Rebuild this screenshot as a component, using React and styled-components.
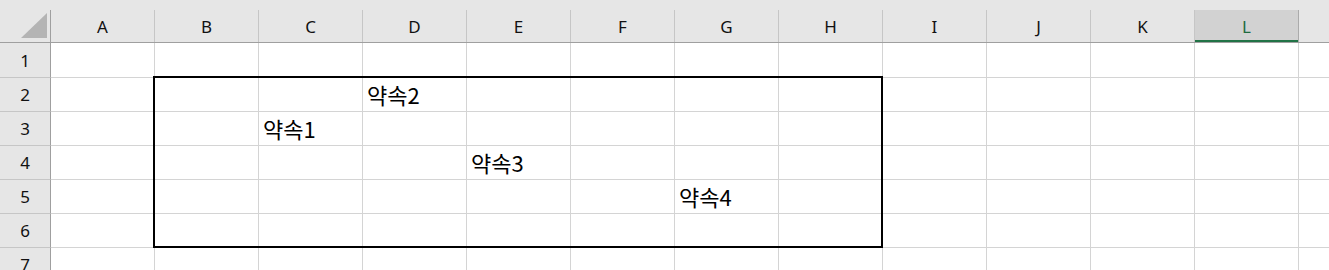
import styled, { createGlobalStyle } from "styled-components";

const GlobalStyle = createGlobalStyle`
    html, body {
        margin: 0;
        padding: 0;
        background: #FFFFFF;
    }
`;

const COLUMNS = ["A", "B", "C", "D", "E", "F", "G", "H", "I", "J", "K", "L", "M"];
const ROWS = [1, 2, 3, 4, 5, 6, 7];
const CELLS = {
    D2: "약속2",
    C3: "약속1",
    E4: "약속3",
    G5: "약속4",
};
const SELECTED_COLUMN = "L";

export default function App() {
    return (
        <>
            <GlobalStyle />
            <SHEET>
                <HEADERROW>
                    <CORNER>
                        <svg width="50" height="32" viewBox="0 0 50 32">
                            <polygon points="21,28 47,3 47,28" fill="#B4B4B4" />
                        </svg>
                    </CORNER>
                    {COLUMNS.map(col => (
                        <COLHEADER key={col} selected={col === SELECTED_COLUMN}>{col}</COLHEADER>
                    ))}
                </HEADERROW>
                {ROWS.map(row => (
                    <ROW key={row} first={row === 1}>
                        <ROWHEADER>{row}</ROWHEADER>
                        {COLUMNS.map(col => (
                            <CELL key={col}>{CELLS[`${col}${row}`]}</CELL>
                        ))}
                    </ROW>
                ))}
                <RANGEBOX />
            </SHEET>
        </>
    );
}

const SHEET = styled.div`
    position: relative;
    width: 1329px;
    height: 270px;
    overflow: hidden;
    font-family: "Noto Sans", "Noto Sans CJK KR", sans-serif;
`;

const HEADERROW = styled.div`
    display: flex;
    padding-top: 10px;
    background-color: #E6E6E6;
    border-bottom: 1px solid #9F9F9F;
`;

const CORNER = styled.div`
    flex: none;
    width: 50px;
    height: 32px;
    border-right: 1px solid #9F9F9F;
    svg {
        display: block;
    }
`;

const COLHEADER = styled.div`
    flex: none;
    display: flex;
    align-items: center;
    justify-content: center;
    width: 104px;
    height: 32px;
    border-right: 1px solid ${props => props.selected ? "#ABABAB" : "#C6C6C6"};
    background-color: ${props => props.selected ? "#D2D2D2" : "#E6E6E6"};
    box-shadow: ${props => props.selected ? "inset 0 -2px 0 #217346" : "none"};
    color: ${props => props.selected ? "#1E6B40" : "#111111"};
    font-size: 17px;
    padding-top: 1px;
    box-sizing: border-box;
`;

const ROW = styled.div`
    display: flex;
    height: ${props => props.first ? "35px" : "34px"};
`;

const ROWHEADER = styled.div`
    flex: none;
    display: flex;
    align-items: center;
    justify-content: center;
    width: 50px;
    background-color: #E6E6E6;
    border-right: 1px solid #9F9F9F;
    border-bottom: 1px solid #C6C6C6;
    color: #111111;
    font-size: 17px;
`;

const CELL = styled.div`
    flex: none;
    display: flex;
    align-items: flex-end;
    width: 104px;
    padding: 0 0 4px 4px;
    box-sizing: border-box;
    border-right: 1px solid #D4D4D4;
    border-bottom: 1px solid #D4D4D4;
    color: #000000;
    font-family: "Noto Sans CJK KR", sans-serif;
    font-size: 22px;
    line-height: 26px;
    white-space: nowrap;
`;

const RANGEBOX = styled.div`
    position: absolute;
    left: 153px;
    top: 76px;
    width: 730px;
    height: 172px;
    border: 2px solid #000000;
    box-sizing: border-box;
    pointer-events: none;
`;
